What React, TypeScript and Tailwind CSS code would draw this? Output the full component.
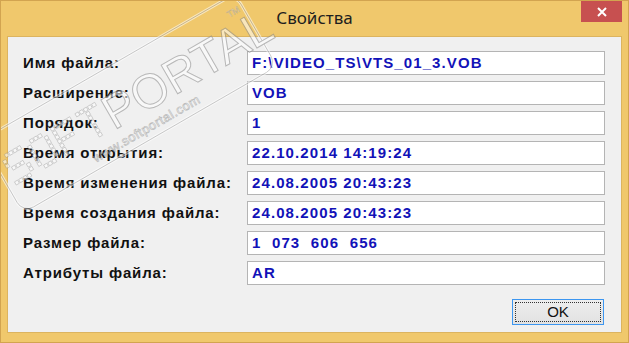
const ROWS: { label: string; value: string }[] = [
  { label: "Имя файла:", value: "F:\\VIDEO_TS\\VTS_01_3.VOB" },
  { label: "Расширение:", value: "VOB" },
  { label: "Порядок:", value: "1" },
  { label: "Время открытия:", value: "22.10.2014 14:19:24" },
  { label: "Время изменения файла:", value: "24.08.2005 20:43:23" },
  { label: "Время создания файла:", value: "24.08.2005 20:43:23" },
  { label: "Размер файла:", value: "1  073  606  656" },
  { label: "Атрибуты файла:", value: "AR" },
];

// 5x7 dot letters for the "SOFT" part of the stamp
const DOT_LETTERS = [
  [".####", "#....", "#....", ".###.", "....#", "....#", "####."],
  [".###.", "#...#", "#...#", "#...#", "#...#", "#...#", ".###."],
  ["#####", "#....", "#....", "####.", "#....", "#....", "#...."],
  ["#####", "..#..", "..#..", "..#..", "..#..", "..#..", "..#.."],
];

// softportal stamp over the top-left corner
function Watermark() {
  const pitch = 4.8;
  const dots: JSX.Element[] = [];
  DOT_LETTERS.forEach((letter, li) => {
    letter.forEach((line, r) => {
      line.split("").forEach((ch, c) => {
        if (ch !== "#") return;
        dots.push(
          <rect
            key={`${li}-${r}-${c}`}
            x={-150 + (li * 6 + c) * pitch}
            y={-22 + r * pitch}
            width={3.6}
            height={3.6}
          />
        );
      });
    });
  });
  return (
    <svg
      className="pointer-events-none absolute left-0 top-0"
      width="300"
      height="210"
      viewBox="0 0 300 210"
    >
      <g transform="translate(140 100) rotate(-30)" opacity="0.55">
        <rect x="-158" y="-46" width="293" height="84" rx="12" fill="none" stroke="#ffffff" strokeWidth="3" />
        <rect x="-158" y="-46" width="293" height="84" rx="12" fill="none" stroke="#9a9a9a" strokeWidth="0.8" />
        <g fill="#ffffff" stroke="#8a8a8a" strokeWidth="0.6">{dots}</g>
        <text
          x="-38"
          y="12"
          fontFamily="Liberation Sans, Arial, sans-serif"
          fontSize="48"
          fill="#ffffff"
          stroke="#8a8a8a"
          strokeWidth="1"
        >
          PORTAL
        </text>
        <text
          x="-70"
          y="31"
          fontFamily="Liberation Sans, Arial, sans-serif"
          fontSize="13"
          fill="#ffffff"
          stroke="#8a8a8a"
          strokeWidth="0.6"
          letterSpacing="0.5"
        >
          www.softportal.com
        </text>
        <text
          x="118"
          y="-28"
          fontFamily="Liberation Sans, Arial, sans-serif"
          fontSize="9"
          fill="#ffffff"
          stroke="#8a8a8a"
          strokeWidth="0.4"
        >
          TM
        </text>
      </g>
    </svg>
  );
}

export default function App() {
  return (
    <div className="relative flex h-[343px] w-[629px] flex-col overflow-hidden border border-[#d2a450] bg-[#f0c86c]">
      <div className="relative flex h-[35px] shrink-0 items-center justify-center">
        <span className="mt-[-1px] font-['Noto_Sans','Open_Sans',sans-serif] text-[17px] text-[#1e1e1e]">
          Свойства
        </span>
        <div className="absolute right-[6px] top-0 flex h-[21px] w-[41px] items-center justify-center bg-[#c75050]">
          <svg width="10" height="10" viewBox="0 0 10 10">
            <path d="M1 1 L9 9 M9 1 L1 9" stroke="#ffffff" strokeWidth="2" />
          </svg>
        </div>
      </div>

      <div className="mx-[6px] mb-[9px] flex flex-1 flex-col border border-[#dcb460] bg-[#f0f0f0] pl-[15px] pr-[16px] pt-[14px]">
        <div className="flex flex-col gap-[6px]">
          {ROWS.map((row) => (
            <div key={row.label} className="flex h-[24px] items-center">
              <div className="w-[224px] shrink-0 font-['Liberation_Sans',Arial,sans-serif] text-[15px] font-bold tracking-[0.85px] text-[#111]">
                {row.label}
              </div>
              <div className="flex h-[24px] flex-1 items-center border border-[#b4b4b4] bg-white pl-[4px]">
                <span className="whitespace-pre font-['Liberation_Sans',Arial,sans-serif] text-[15px] font-bold tracking-[1.1px] text-[#1212b8]">
                  {row.value}
                </span>
              </div>
            </div>
          ))}
        </div>
        <div className="mt-[14px] flex justify-end pr-[1px]">
          <div className="flex h-[26px] w-[92px] items-center justify-center border border-[#3c96f0] bg-gradient-to-b from-[#eeeeee] to-[#e2e2e2] p-[2px]">
            <div className="flex h-full w-full items-center justify-center border border-dotted border-[#333]">
              <span className="font-['Liberation_Sans',Arial,sans-serif] text-[15px] text-[#111]">OK</span>
            </div>
          </div>
        </div>
      </div>

      <Watermark />
    </div>
  );
}
